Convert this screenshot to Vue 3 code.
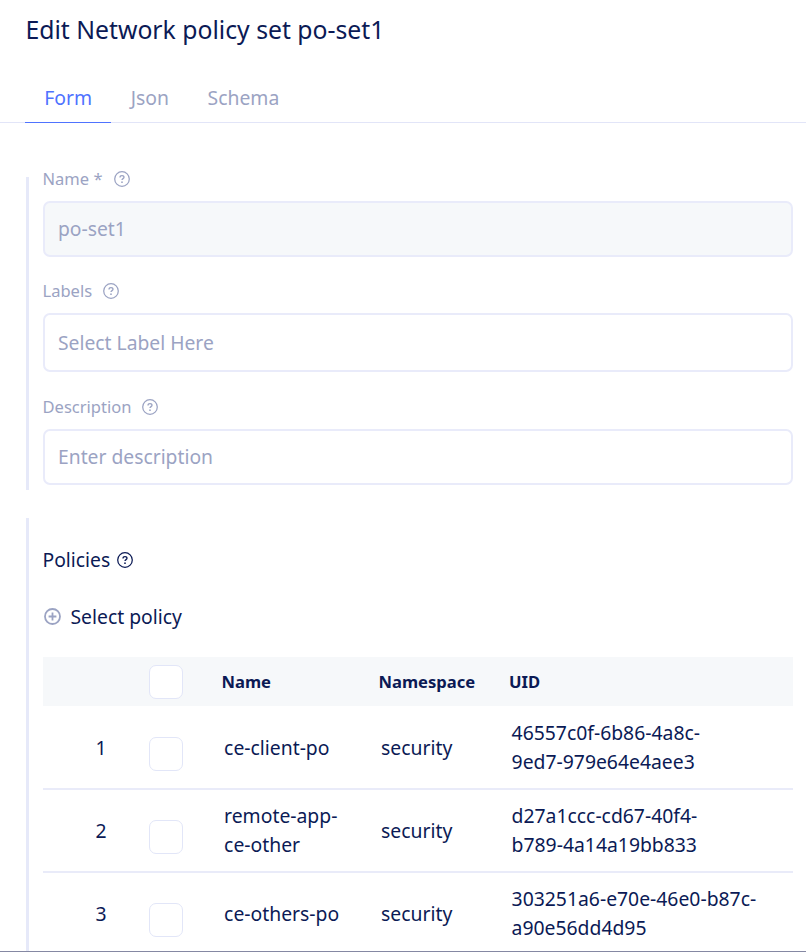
<script setup>
import { h } from 'vue'

const tabs = ['Form', 'Json', 'Schema']
const fields = [
  { id: 'name', label: 'Name *', value: 'po-set1', disabled: true },
  { id: 'labels', label: 'Labels', value: 'Select Label Here' },
  { id: 'description', label: 'Description', value: 'Enter description' },
]
const policies = [
  { name: 'ce-client-po', namespace: 'security', uid: '46557c0f-6b86-4a8c-\n9ed7-979e64e4aee3' },
  { name: 'remote-app-ce-other', namespace: 'security', uid: 'd27a1ccc-cd67-40f4-\nb789-4a14a19bb833' },
  { name: 'ce-others-po', namespace: 'security', uid: '303251a6-e70e-46e0-b87c-\na90e56dd4d95' },
]

const HelpIcon = () =>
  h('svg', { width: 16, height: 16, viewBox: '0 0 16 16', fill: 'none', stroke: 'currentColor' }, [
    h('circle', { cx: 8, cy: 8, r: 7.3, 'stroke-width': 1.25 }),
    h('path', {
      d: 'M6 6.4C6 5.2 6.8 4.6 8 4.6s2 .7 2 1.7c0 1.3-2 1.4-2 2.8',
      'stroke-width': 1.3,
    }),
    h('circle', { cx: 8, cy: 11.2, r: 0.85, fill: 'currentColor', stroke: 'none' }),
  ])
</script>

<template>
  <main class="page">
    <h1 class="title">Edit Network policy set po-set1</h1>
    <nav class="tabs">
      <a v-for="(tab, i) in tabs" :key="tab" class="tab" :class="{ active: i === 0 }">{{ tab }}</a>
    </nav>

    <section class="section metadata">
      <div v-for="f in fields" :key="f.id" class="field" :class="f.id">
        <div class="label"><span>{{ f.label }}</span><HelpIcon /></div>
        <div class="input" :class="{ disabled: f.disabled }">{{ f.value }}</div>
      </div>
    </section>

    <section class="section policies">
      <h2 class="heading"><span>Policies</span><HelpIcon /></h2>
      <div class="select">
        <svg width="17" height="17" viewBox="0 0 17 17" fill="none" stroke="currentColor" stroke-width="1.8">
          <circle cx="8.5" cy="8.5" r="7.5" />
          <path d="M8.5 4.6v7.8M4.6 8.5h7.8" />
        </svg>
        <span>Select policy</span>
      </div>
      <div class="table">
        <div class="row head">
          <span></span>
          <span class="checkbox"></span>
          <span>Name</span>
          <span>Namespace</span>
          <span>UID</span>
        </div>
        <div v-for="(p, i) in policies" :key="p.name" class="row body">
          <span class="num">{{ i + 1 }}</span>
          <span class="checkbox"></span>
          <span class="cell policy-name">{{ p.name }}</span>
          <span class="cell">{{ p.namespace }}</span>
          <span class="cell uid">{{ p.uid }}</span>
        </div>
      </div>
    </section>
  </main>
</template>

<style>
body {
  background: #fff;
}
</style>

<style scoped>
.page {
  box-sizing: border-box;
  height: 952px;
  overflow: hidden;
  display: flex;
  flex-direction: column;
  border-bottom: 1px solid #8588a3;
  font: 400 19.35px/29px 'Noto Sans', sans-serif;
  color: #0b1a55;
}
.title {
  margin: 0;
  padding: 13px 26px 0 25.5px;
  font-size: 24.75px;
  line-height: 34px;
  font-weight: 400;
}
.tabs {
  display: flex;
  margin-top: 28px;
  padding-left: 25px;
  height: 48px;
  box-shadow: inset 0 -1px #e2e5f8;
  color: #9ba3c3;
}
.tab {
  box-sizing: border-box;
  padding: 8px 19.3px 0;
}
.tab.active {
  color: #4f73ff;
  border-bottom: 1px solid #4f73ff;
}
.section {
  margin-left: 26px;
  padding: 0 13px 0 14px;
  border-left: 3px solid #e6e9f9;
}
.metadata {
  margin-top: 54px;
  height: 313px;
}
.field {
  color: #9ba3c3;
}
.label {
  display: flex;
  align-items: center;
  gap: 11px;
  height: 24px;
  margin: 0 0 10px -0.5px;
  font-size: 16.55px;
  line-height: 24px;
}
.name .label {
  margin-top: -10px;
}
.field.labels {
  margin-top: 22px;
}
.field.description {
  margin-top: 23px;
}
.input {
  box-sizing: border-box;
  display: flex;
  align-items: center;
  height: 56px;
  padding: 0 13px 2px;
  border: 2px solid #e9ebfa;
  border-radius: 7px;
  font-size: 19.3px;
}
.input.disabled {
  background: #f6f8fa;
}
.labels .input {
  height: 59px;
  padding-bottom: 0;
}
.policies {
  flex: 1;
  min-height: 0;
  margin-top: 28px;
}
.heading {
  display: flex;
  align-items: center;
  gap: 7px;
  margin: 27px 0 0 -0.5px;
  font-size: 19.3px;
  font-weight: 400;
}
.select {
  display: flex;
  align-items: center;
  gap: 9.5px;
  margin-top: 28px;
  padding-left: 1px;
}
.select svg {
  color: #9ba3c3;
}
.table {
  margin-top: 26px;
}
.row {
  display: grid;
  grid-template-columns: 106px 72.5px 157px 130.5px 1fr;
  align-items: center;
}
.head {
  height: 49px;
  background: #f6f8fa;
  font-size: 16.6px;
  font-weight: 700;
}
.body {
  box-sizing: border-box;
  height: 82px;
  padding-top: 1px;
}
.body + .body {
  height: 83px;
  padding-top: 0;
  border-top: 2px solid #e9ebf9;
}
.num {
  padding: 0 0 1px 52.5px;
}
.cell {
  padding: 0 0 1px 2.6px;
}
.policy-name {
  padding-right: 30px;
}
.uid {
  white-space: pre-line;
}
.checkbox {
  box-sizing: border-box;
  width: 34px;
  height: 34px;
  border: 1.5px solid #e2e6f8;
  border-radius: 7px;
  background: #fff;
}
.body .checkbox {
  margin-top: 12px;
}
</style>
